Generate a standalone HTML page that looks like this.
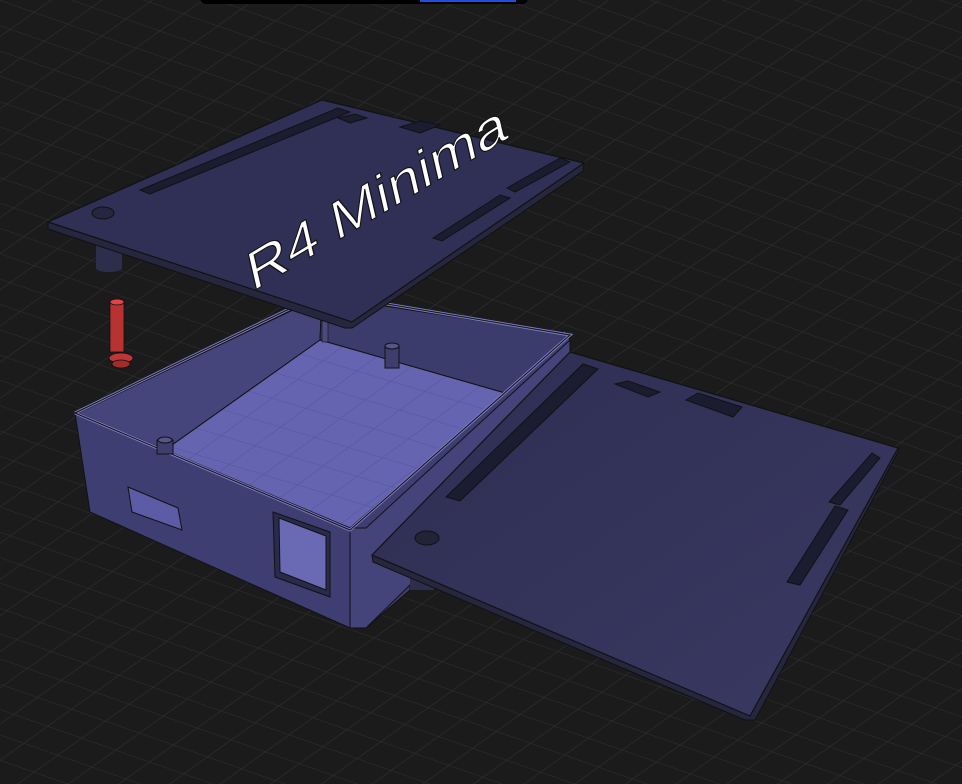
<!DOCTYPE html>
<html><head><meta charset="utf-8"><style>
html,body{margin:0;padding:0;background:#1b1b1c;}
svg{display:block}
</style></head><body>
<svg width="962" height="784" viewBox="0 0 962 784" xmlns="http://www.w3.org/2000/svg">
<defs>
<pattern id="g" width="34" height="34" patternUnits="userSpaceOnUse" patternTransform="matrix(1,0.35,-0.7,0.5,0,0)">
<path d="M34 0H0V34" fill="none" stroke="#2d2d30" stroke-width="1.6"/>
</pattern>
<pattern id="fg" width="34" height="34" patternUnits="userSpaceOnUse" patternTransform="matrix(1,0.3,-0.75,0.55,0,0)">
<path d="M34 0H0V34" fill="none" stroke="#5656a0" stroke-width="1.6"/>
</pattern>
<linearGradient id="rl" x1="0" y1="0" x2="1" y2="1"><stop offset="0" stop-color="#2e2d52"/><stop offset="1" stop-color="#3a3962"/></linearGradient>
</defs>
<rect width="962" height="784" fill="#1b1b1c"/>
<rect width="962" height="784" fill="url(#g)"/>
<rect x="200" y="-10" width="328" height="14" rx="6" fill="#000"/>
<rect x="420" y="-4" width="96" height="6" fill="#1e4fe0"/>

<!-- box outer walls -->
<polygon points="75,413 90,512 350,628 366,628 410,590 410,560 570,340 565,330 350,528" fill="#3e3e72" stroke="#111" stroke-width="1"/>
<polygon points="350,528 366,528 570,340 570,360 410,585 366,628 350,628" fill="#44447a" stroke="#111" stroke-width="1"/>
<!-- inner walls -->
<polygon points="78,413 322,296 320,340 165,450" fill="#45457c" stroke="#111" stroke-width="1"/>
<polygon points="322,296 568,335 505,393 320,340" fill="#3c3c6c" stroke="#111" stroke-width="1"/>
<!-- floor -->
<polygon points="320,340 505,393 350,528 165,450" fill="#6464b0"/>
<polygon points="320,340 505,393 350,528 165,450" fill="url(#fg)" stroke="#111"/>
<!-- rim -->
<polyline points="75,413 322,293 570,335 350,530 75,413" fill="none" stroke="#7c7cc4" stroke-width="3"/>
<polyline points="75,413 322,293 570,335 350,530 75,413" fill="none" stroke="#111" stroke-width="1"/>
<!-- side windows -->
<polygon points="128,487 178,508 182,530 132,512" fill="#5b5ba6" stroke="#111"/>
<polygon points="273,512 330,532 330,597 275,577" fill="#2a2a4a" stroke="#111"/>
<polygon points="279,518 326,536 326,590 280,572" fill="#6a6ab4" stroke="#111"/>
<!-- posts -->
<rect x="385" y="346" width="14" height="22" fill="#3e3e6e" stroke="#111"/>
<ellipse cx="392" cy="346" rx="7" ry="3" fill="#55558a" stroke="#111"/>
<rect x="157" y="440" width="16" height="14" fill="#3e3e6e" stroke="#111"/>
<ellipse cx="165" cy="440" rx="7" ry="3" fill="#55558a" stroke="#111"/>
<rect x="322" y="310" width="6" height="32" fill="#4a4a80" stroke="#111" stroke-width=".6"/>

<!-- red screw -->
<rect x="110" y="302" width="14" height="50" fill="#b83232" stroke="#111" stroke-width=".8"/>
<ellipse cx="117" cy="302" rx="7" ry="3" fill="#e04444" stroke="#111" stroke-width=".8"/>
<ellipse cx="121" cy="358" rx="12" ry="5" fill="#c03636" stroke="#111" stroke-width=".8"/>
<ellipse cx="121" cy="364" rx="9" ry="4" fill="#a02c2c" stroke="#111" stroke-width=".8"/>

<!-- top lid -->
<rect x="96" y="245" width="26" height="24" fill="#2d2d4c"/>
<ellipse cx="109" cy="268" rx="13" ry="4" fill="#2d2d4c"/>
<polygon points="48,222 48,229 345,328 352,328 583,171 584,163" fill="#26263f" stroke="#111"/>
<polygon points="48,222 322,100 584,163 352,322" fill="#302f56" stroke="#111" stroke-width="1.2"/>
<g fill="#1c1c30" stroke="#111">
<polygon points="140,190 338,108 350,112 150,194"/>
<polygon points="338,118 355,114 367,118 350,123"/>
<polygon points="400,127 420,121 440,125 420,133"/>
<polygon points="433,238 500,195 510,198 442,241"/>
<polygon points="507,188 560,158 570,162 515,192"/>
</g>
<ellipse cx="103" cy="213" rx="11" ry="6" fill="#26263f" stroke="#111"/>
<text x="0" y="0" transform="translate(252,292) rotate(-31) skewX(-18)" font-family="Liberation Sans, sans-serif" font-size="50" fill="#fff" stroke="#111" stroke-width="1" textLength="300" lengthAdjust="spacingAndGlyphs">R4 Minima</text>

<!-- right lid -->
<rect x="410" y="570" width="24" height="20" fill="#2d2d4c"/>
<polygon points="372,555 373,562 745,720 755,720 898,452 899,448" fill="#26263f" stroke="#111"/>
<polygon points="372,555 570,352 898,448 750,716" fill="url(#rl)" stroke="#111" stroke-width="1.2"/>
<g fill="#1c1c30" stroke="#111">
<polygon points="446,497 583,364 598,369 460,501"/>
<polygon points="615,384 628,381 660,392 648,397"/>
<polygon points="686,400 698,393 742,407 733,417"/>
<polygon points="829,502 872,453 880,458 840,505"/>
<polygon points="787,582 835,506 848,510 800,585"/>
</g>
<ellipse cx="427" cy="538" rx="12" ry="7" fill="#232338" stroke="#111"/>
</svg>
</body></html>
